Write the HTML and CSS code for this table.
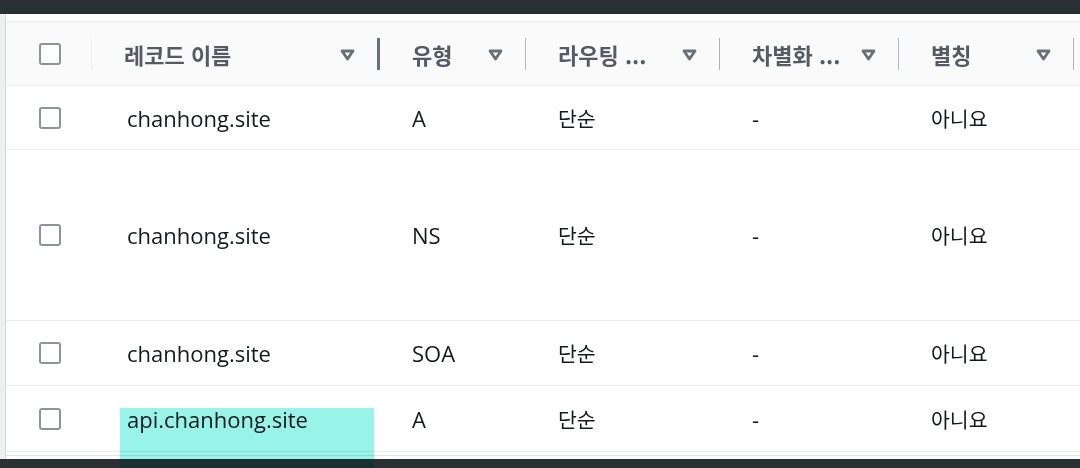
FILE: index.html
```html
<!DOCTYPE html>
<html lang="ko">
<head>
    <meta charset="UTF-8">
    <meta name="viewport" content="width=device-width, initial-scale=1.0">
    <title>레코드</title>
    <link rel="stylesheet" href="styles.css">
</head>
<body>
    <div class="topbar"></div>

    <div class="main">
        <div class="side"></div>

        <div class="table-wrap">
            <div class="grid head">
                <div class="hcell check-cell">
                    <span class="checkbox"></span>
                    <span class="sep light"></span>
                </div>
                <div class="hcell">
                    <span class="label">레코드 이름</span>
                    <svg class="sort" width="15" height="12" viewBox="0 0 15 12"><path d="M2 2 H13 L7.5 10 Z" /></svg>
                    <span class="sep thick"></span>
                </div>
                <div class="hcell">
                    <span class="label">유형</span>
                    <svg class="sort" width="15" height="12" viewBox="0 0 15 12"><path d="M2 2 H13 L7.5 10 Z" /></svg>
                    <span class="sep"></span>
                </div>
                <div class="hcell">
                    <span class="label">라우팅 ...</span>
                    <svg class="sort" width="15" height="12" viewBox="0 0 15 12"><path d="M2 2 H13 L7.5 10 Z" /></svg>
                    <span class="sep"></span>
                </div>
                <div class="hcell">
                    <span class="label">차별화 ...</span>
                    <svg class="sort" width="15" height="12" viewBox="0 0 15 12"><path d="M2 2 H13 L7.5 10 Z" /></svg>
                    <span class="sep"></span>
                </div>
                <div class="hcell">
                    <span class="label">별칭</span>
                    <svg class="sort" width="15" height="12" viewBox="0 0 15 12"><path d="M2 2 H13 L7.5 10 Z" /></svg>
                    <span class="sep"></span>
                </div>
                <div class="hcell last"></div>
            </div>

            <div class="grid row r1">
                <div class="cell check-cell"><span class="checkbox"></span></div>
                <div class="cell latin name">chanhong.site</div>
                <div class="cell latin">A</div>
                <div class="cell">단순</div>
                <div class="cell latin">-</div>
                <div class="cell">아니요</div>
                <div class="cell"></div>
            </div>
            <div class="grid row r2">
                <div class="cell check-cell"><span class="checkbox"></span></div>
                <div class="cell latin name">chanhong.site</div>
                <div class="cell latin">NS</div>
                <div class="cell">단순</div>
                <div class="cell latin">-</div>
                <div class="cell">아니요</div>
                <div class="cell"></div>
            </div>
            <div class="grid row r3">
                <div class="cell check-cell"><span class="checkbox"></span></div>
                <div class="cell latin name">chanhong.site</div>
                <div class="cell latin">SOA</div>
                <div class="cell">단순</div>
                <div class="cell latin">-</div>
                <div class="cell">아니요</div>
                <div class="cell"></div>
            </div>
            <div class="grid row r4">
                <div class="cell check-cell"><span class="checkbox"></span></div>
                <div class="cell latin name">api.chanhong.site</div>
                <div class="cell latin">A</div>
                <div class="cell">단순</div>
                <div class="cell latin">-</div>
                <div class="cell">아니요</div>
                <div class="cell"></div>
            </div>
            <div class="table-end"></div>
        </div>
    </div>

    <div class="bottombar"></div>

    <!-- 형광펜 표시 -->
    <div class="highlight"></div>
</body>
</html>
```

FILE: styles.css
```css
html, body {
    margin: 0;
    height: 468px;
    overflow: hidden;
}
body {
    font-family: "Open Sans", "Noto Sans CJK KR", sans-serif;
    background-color: #fff;
    color: #16191f;
    display: flex;
    flex-direction: column;
}
.topbar {
    height: 14px;
    background-color: #293135;
}
.main {
    flex: 1;
    display: flex;
}
.side {
    flex-shrink: 0;
    width: 5px;
    background-color: #eef0f0;
    border-right: 1px solid #d5d9d9;
}
.table-wrap {
    flex: 1;
    min-width: 0;
    padding-top: 7px;
}
.grid {
    display: grid;
    grid-template-columns: 86px 288px 146px 194px 179px 175px 1fr;
}
.head {
    height: 63px;
    background-color: #fafafa;
    border-top: 1px solid #eaeded;
    border-bottom: 1px solid #e9ebed;
}
.hcell {
    display: flex;
    align-items: center;
    min-width: 0;
    padding-left: 32px;
    font-family: "Noto Sans CJK KR", sans-serif;
    font-weight: 700;
    font-size: 22px;
    color: #545b64;
}
.hcell.check-cell {
    padding-left: 33px;
}
.hcell.last {
    padding-left: 0;
}
.label {
    flex: 1;
    white-space: nowrap;
}
.sort {
    margin-right: 22px;
    margin-top: 2px;
}
.sort path {
    fill: #fafafa;
    stroke: #687078;
    stroke-width: 2.8;
    stroke-linejoin: round;
}
.sep {
    width: 1px;
    height: 32px;
    background-color: #aab7b8;
}
.sep.light {
    margin-left: auto;
    background-color: #e9ebed;
}
.sep.thick {
    width: 3px;
    background-color: #687078;
}
.checkbox {
    display: inline-block;
    width: 18px;
    height: 18px;
    border: 2px solid #8d9696;
    border-radius: 3px;
    background-color: #fff;
}
.row {
    border-bottom: 1px solid #eaeded;
}
.r1 { height: 63px; }
.r2 { height: 170px; }
.r3 { height: 64px; }
.r4 { height: 65px; }
.cell {
    display: flex;
    align-items: center;
    min-width: 0;
    padding-left: 32px;
    font-size: 20.5px;
    white-space: nowrap;
}
.cell.latin {
    font-size: 22px;
}
.cell.name {
    padding-left: 35px;
}
.cell.check-cell {
    padding-left: 33px;
}
.table-end {
    height: 3px;
    border-bottom: 1px solid #e3e6e6;
}
.bottombar {
    height: 9px;
    background-color: #293135;
}
.highlight {
    position: absolute;
    left: 120px;
    top: 408px;
    width: 254px;
    height: 60px;
    background-color: #98f3e8;
    mix-blend-mode: multiply;
}
```
